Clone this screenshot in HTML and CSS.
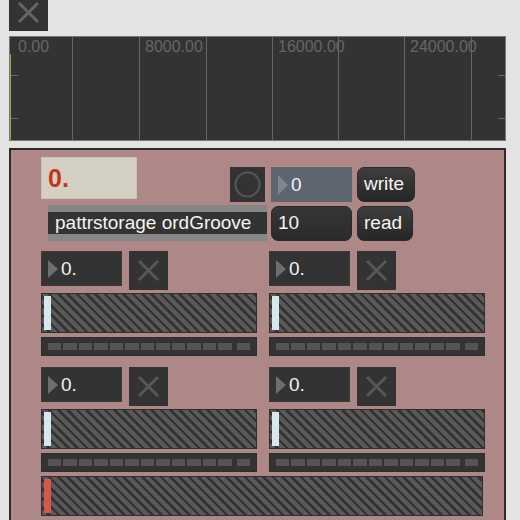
FILE: index.html
```html
<!DOCTYPE html>
<html>
<head>
<meta charset="utf-8">
<link rel="stylesheet" href="styles.css">
</head>
<body>
<div class="xbtn top-x">
  <svg width="39" height="31" viewBox="0 0 39 31"><path d="M10 3 L29 22 M29 3 L10 22" stroke="#666" stroke-width="3" fill="none"/></svg>
</div>

<div class="wave">
  <div class="cell c1"><span class="lbl first">0.00</span></div>
  <div class="cell c2"></div>
  <div class="cell c3"><span class="lbl">8000.00</span></div>
  <div class="cell c4"></div>
  <div class="cell c5"><span class="lbl">16000.00</span></div>
  <div class="cell c6"></div>
  <div class="cell c7"><span class="lbl">24000.00</span></div>
  <div class="cell c8"></div>
  <div class="cursor"></div>
  <div class="tick tl1"></div>
  <div class="tick tl2"></div>
  <div class="tick tr1"></div>
  <div class="tick tr2"></div>
</div>

<div class="panel">
  <div class="head-a">
    <div class="display">0.</div>
    <div class="ctrl-group">
      <div class="toggle">
        <svg width="35" height="35" viewBox="0 0 35 35"><circle cx="17.5" cy="17.5" r="12" stroke="#555" stroke-width="2.2" fill="none"/></svg>
      </div>
      <div class="numbox slate"><span class="tri tri-slate"></span><span class="nbtext">0</span></div>
      <div class="btn write">write</div>
    </div>
  </div>
  <div class="head-b">
    <div class="pattr"><div class="pattr-inner">pattrstorage ordGroove</div></div>
    <div class="btn ten">10</div>
    <div class="btn read">read</div>
  </div>

  <div class="units">
    <div class="unit">
      <div class="unit-top">
        <div class="numbox"><span class="tri"></span><span class="nbtext">0.</span></div>
        <div class="xbtn"><svg width="39" height="39" viewBox="0 0 39 39"><path d="M10 10 L29 29 M29 10 L10 29" stroke="#575757" stroke-width="3" fill="none"/></svg></div>
      </div>
      <div class="slider"><div class="knob"></div></div>
      <div class="meter"><i></i><i></i><i></i><i></i><i></i><i></i><i></i><i></i><i></i><i></i><i></i><i></i><i class="last"></i></div>
    </div>
    <div class="unit">
      <div class="unit-top">
        <div class="numbox"><span class="tri"></span><span class="nbtext">0.</span></div>
        <div class="xbtn"><svg width="39" height="39" viewBox="0 0 39 39"><path d="M10 10 L29 29 M29 10 L10 29" stroke="#575757" stroke-width="3" fill="none"/></svg></div>
      </div>
      <div class="slider"><div class="knob"></div></div>
      <div class="meter"><i></i><i></i><i></i><i></i><i></i><i></i><i></i><i></i><i></i><i></i><i></i><i></i><i class="last"></i></div>
    </div>
    <div class="unit">
      <div class="unit-top">
        <div class="numbox"><span class="tri"></span><span class="nbtext">0.</span></div>
        <div class="xbtn"><svg width="39" height="39" viewBox="0 0 39 39"><path d="M10 10 L29 29 M29 10 L10 29" stroke="#575757" stroke-width="3" fill="none"/></svg></div>
      </div>
      <div class="slider"><div class="knob"></div></div>
      <div class="meter"><i></i><i></i><i></i><i></i><i></i><i></i><i></i><i></i><i></i><i></i><i></i><i></i><i class="last"></i></div>
    </div>
    <div class="unit">
      <div class="unit-top">
        <div class="numbox"><span class="tri"></span><span class="nbtext">0.</span></div>
        <div class="xbtn"><svg width="39" height="39" viewBox="0 0 39 39"><path d="M10 10 L29 29 M29 10 L10 29" stroke="#575757" stroke-width="3" fill="none"/></svg></div>
      </div>
      <div class="slider"><div class="knob"></div></div>
      <div class="meter"><i></i><i></i><i></i><i></i><i></i><i></i><i></i><i></i><i></i><i></i><i></i><i></i><i class="last"></i></div>
    </div>
  </div>

  <div class="slider wide"><div class="knob red"></div></div>
</div>
</body>
</html>
```

FILE: styles.css
```css
* { box-sizing: border-box; }
html, body { margin: 0; padding: 0; }
body {
  width: 520px;
  height: 520px;
  overflow: hidden;
  background: #e3e3e3;
  font-family: "Liberation Sans", Arial, sans-serif;
}

.xbtn {
  width: 39px;
  height: 39px;
  background: #333;
  flex: none;
}
.xbtn svg { display: block; }
.top-x {
  margin-left: 9px;
  height: 31px;
}

/* waveform */
.wave {
  position: relative;
  margin: 5px 0 0 9px;
  width: 497px;
  height: 105px;
  background: #333;
  border: 1px solid #777;
  display: flex;
}
.cell {
  height: 100%;
  border-right: 1px solid #666;
  flex: none;
}
.c1 { width: 63px; }
.c2 { width: 67px; }
.c3 { width: 67px; }
.c4 { width: 66px; }
.c5 { width: 66px; }
.c6 { width: 66px; }
.c7 { width: 67px; }
.c8 { flex: 1; border-right: none; }
.lbl {
  display: block;
  font-size: 16px;
  line-height: 18px;
  color: #666;
  padding: 1px 0 0 5px;
  white-space: nowrap;
}
.lbl.first { padding-left: 8px; }
.cursor {
  position: absolute;
  left: 0;
  top: 17px;
  bottom: 0;
  width: 1px;
  background: #a3a23f;
}
.tick {
  position: absolute;
  width: 7px;
  height: 1px;
  background: #6a6a6a;
}
.tl1 { left: 1px; top: 38px; }
.tl2 { left: 1px; top: 81px; }
.tr1 { right: 0; top: 38px; }
.tr2 { right: 0; top: 81px; }

/* panel */
.panel {
  margin: 7px 0 0 9px;
  width: 497px;
  height: 420px;
  background: #ad8886;
  border: 2px solid #2c2a2a;
  padding: 7px 0 0 30px;
}
.head-a {
  display: flex;
  align-items: flex-start;
  height: 45px;
}
.display {
  width: 96px;
  height: 42px;
  background: #d4d0c4;
  border: 1px solid #c9c4b6;
  color: #c4361c;
  font-weight: bold;
  font-size: 25px;
  line-height: 40px;
  padding-left: 6px;
}
.ctrl-group {
  display: flex;
  margin: 10px 0 0 93px;
  gap: 6px;
}
.toggle {
  width: 35px;
  height: 35px;
  background: #333;
}
.toggle svg { display: block; }

.numbox {
  width: 81px;
  height: 35px;
  background: #333;
  border: 1px solid #3b3838;
  display: flex;
  align-items: center;
  color: #f2f2f2;
  font-size: 19px;
}
.numbox.slate {
  background: #5c6570;
  border-color: #5c6570;
}
.tri {
  width: 0;
  height: 0;
  border-top: 9px solid transparent;
  border-bottom: 9px solid transparent;
  border-left: 10px solid #6e6e6e;
  margin: 0 3px 0 6px;
}
.tri-slate { border-left-color: #7f8890; border-top-width: 10px; border-bottom-width: 10px; }
.nbtext { line-height: 20px; }

.btn {
  height: 35px;
  border-radius: 7px;
  background: linear-gradient(#3e3e3e, #262626);
  border: 1px solid #2a2a2a;
  color: #f4f4f4;
  font-size: 19px;
  line-height: 32px;
  padding-left: 6px;
}
.btn.write { width: 58px; margin-left: -1px; }

.head-b {
  display: flex;
  align-items: flex-start;
  margin-top: 3px;
  height: 36px;
}
.pattr {
  margin-left: 7px;
  width: 219px;
  height: 36px;
  background: #868686;
  padding-top: 7px;
}
.pattr-inner {
  height: 22px;
  background: #333;
  color: #f4f4f4;
  font-size: 19px;
  line-height: 22px;
  padding-left: 7px;
  white-space: nowrap;
}
.btn.ten {
  width: 81px;
  margin: 1px 0 0 4px;
  background: linear-gradient(#363636, #2a2a2a);
}
.btn.read {
  width: 56px;
  margin: 1px 0 0 5px;
}

.units {
  margin-top: 10px;
  display: grid;
  grid-template-columns: 216px 216px;
  column-gap: 12px;
  row-gap: 11px;
}
.unit-top {
  display: flex;
  align-items: flex-start;
  gap: 7px;
}
.slider {
  margin-top: 3px;
  height: 40px;
  border: 1px solid #2f2f2f;
  background: repeating-linear-gradient(45deg, #595959 0px, #595959 4.2px, #333 4.2px, #333 6.6px);
  padding: 2px;
}
.knob {
  width: 7px;
  height: 100%;
  background: #d7e7eb;
}
.knob.red { background: #d6574b; }
.slider.wide {
  width: 442px;
  margin-top: 4px;
}

.meter {
  margin-top: 4px;
  height: 19px;
  background: #333;
  border: 1px solid #2c2c2c;
  display: flex;
  align-items: center;
  gap: 2px;
  padding: 0 6px 0 6px;
}
.meter i {
  flex: 1;
  height: 7px;
  background: #545454;
}
.meter i.last { margin-left: 3px; }
```
